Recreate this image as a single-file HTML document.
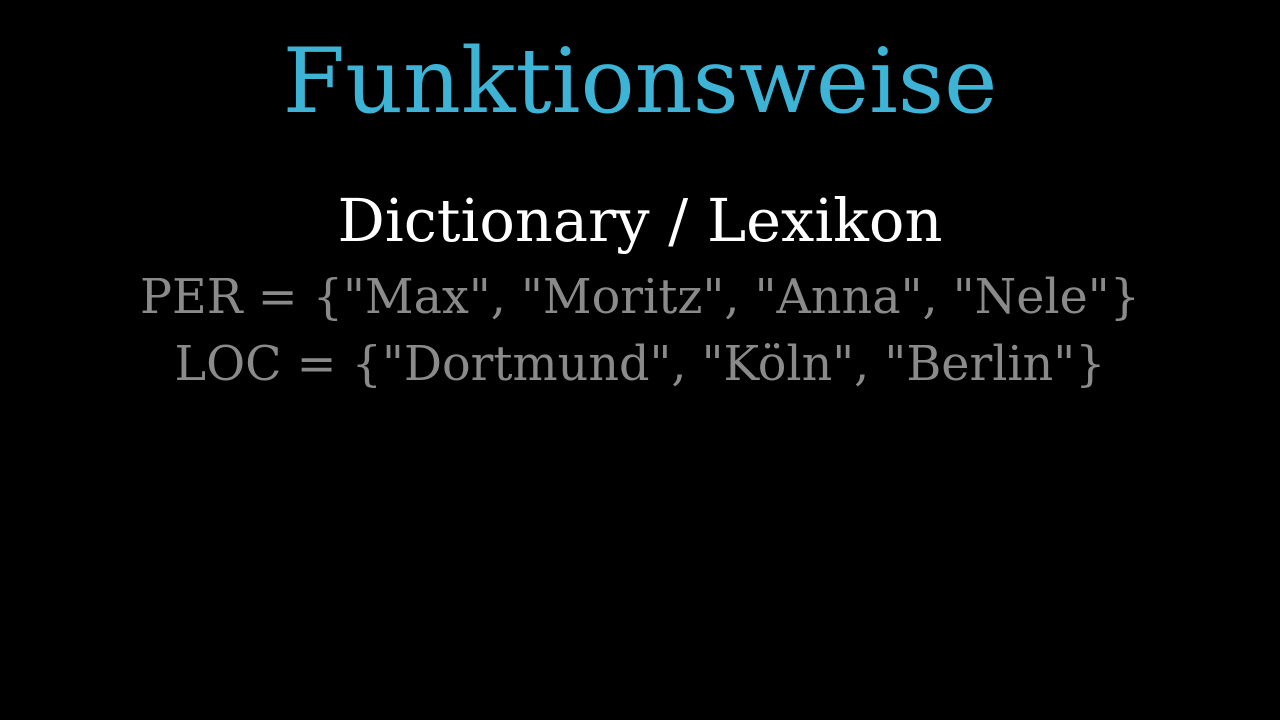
<!DOCTYPE html>
<html><head><meta charset="utf-8"><style>
html,body{margin:0;padding:0;background:#000;width:1280px;height:720px;overflow:hidden}
div{position:absolute;left:0;width:1280px;text-align:center;font-family:"DejaVu Serif","Liberation Serif",serif;line-height:1;white-space:nowrap}
</style></head><body>
<div style="top:37px;font-size:90px;color:#3db4d6">Funktionsweise</div>
<div style="top:191px;font-size:59px;color:#fff">Dictionary / Lexikon</div>
<div style="top:274px;font-size:47.6px;color:#8a8a8a">PER = {"Max", "Moritz", "Anna", "Nele"}</div>
<div style="top:341px;font-size:47.6px;color:#8a8a8a">LOC = {"Dortmund", "Köln", "Berlin"}</div>
</body></html>
